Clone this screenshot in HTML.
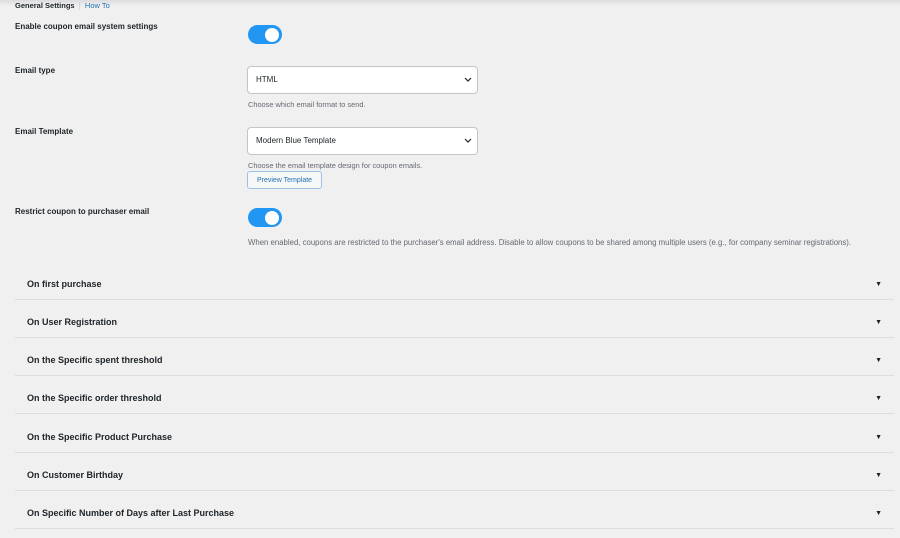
<!DOCTYPE html>
<html><head><style>
body{margin:0;width:900px;height:538px;background:#f0f0f1;font-family:"Liberation Sans",sans-serif;color:#1d2327;position:relative;overflow:hidden}
.a{position:absolute}
.top{left:0;top:0;width:900px;height:6px;background:linear-gradient(#dcdcde,#f0f0f1)}
.lbl{font-size:8px;font-weight:bold}
.tog{width:34px;height:19px;border-radius:10px;background:#2196f3}
.tog:after{content:"";position:absolute;right:3px;top:2.5px;width:14px;height:14px;border-radius:50%;background:#fff}
.sel{width:231px;height:28px;background:#fff;border:1px solid #c3c4c7;border-radius:4px;box-sizing:border-box;font-size:8px;line-height:26px;padding-left:8px}
.sel svg{position:absolute;right:5px;top:10px}
.desc{font-size:7.4px;color:#646970;white-space:nowrap}
.row{left:15px;width:879px;height:38px;border-bottom:1px solid #dcdcde;box-sizing:border-box}
.row span{position:absolute;left:12px;top:17px;font-size:9px;font-weight:bold}
.row i{position:absolute;right:12px;top:19px;font-style:normal;font-size:7px}
</style></head><body>
<div class="a top"></div>
<div class="a lbl" style="left:15px;top:1px;font-size:7.5px">General Settings <span style="color:#c3c4c7;font-weight:normal">&nbsp;|&nbsp;</span> <span style="color:#2271b1;font-weight:normal">How To</span></div>
<div class="a lbl" style="left:15px;top:22px">Enable coupon email system settings</div>
<div class="a tog" style="left:248px;top:25px"></div>
<div class="a lbl" style="left:15px;top:66px">Email type</div>
<div class="a sel" style="left:247px;top:66px">HTML<svg width="8" height="6"><path d="M1 1l3 3 3-3" stroke="#1d2327" fill="none" stroke-width="1.2"/></svg></div>
<div class="a desc" style="left:248px;top:100px">Choose which email format to send.</div>
<div class="a lbl" style="left:15px;top:127px">Email Template</div>
<div class="a sel" style="left:247px;top:127px">Modern Blue Template<svg width="8" height="6"><path d="M1 1l3 3 3-3" stroke="#1d2327" fill="none" stroke-width="1.2"/></svg></div>
<div class="a desc" style="left:248px;top:161px">Choose the email template design for coupon emails.</div>
<div class="a" style="left:247px;top:171px;width:73px;height:16px;border:1px solid #9ec2e6;border-radius:3px;background:#f6f7f7;font-size:7px;color:#2271b1;text-align:center;line-height:18px">Preview Template</div>
<div class="a lbl" style="left:15px;top:207px">Restrict coupon to purchaser email</div>
<div class="a tog" style="left:248px;top:208px"></div>
<div class="a desc" style="left:248px;top:238px;font-size:7.8px">When enabled, coupons are restricted to the purchaser's email address. Disable to allow coupons to be shared among multiple users (e.g., for company seminar registrations).</div>
<div class="a row" style="top:262px"><span>On first purchase</span><i>▼</i></div>
<div class="a row" style="top:300px"><span>On User Registration</span><i>▼</i></div>
<div class="a row" style="top:338px"><span>On the Specific spent threshold</span><i>▼</i></div>
<div class="a row" style="top:376px"><span>On the Specific order threshold</span><i>▼</i></div>
<div class="a row" style="top:415px"><span>On the Specific Product Purchase</span><i>▼</i></div>
<div class="a row" style="top:453px"><span>On Customer Birthday</span><i>▼</i></div>
<div class="a row" style="top:491px"><span>On Specific Number of Days after Last Purchase</span><i>▼</i></div>
</body></html>
